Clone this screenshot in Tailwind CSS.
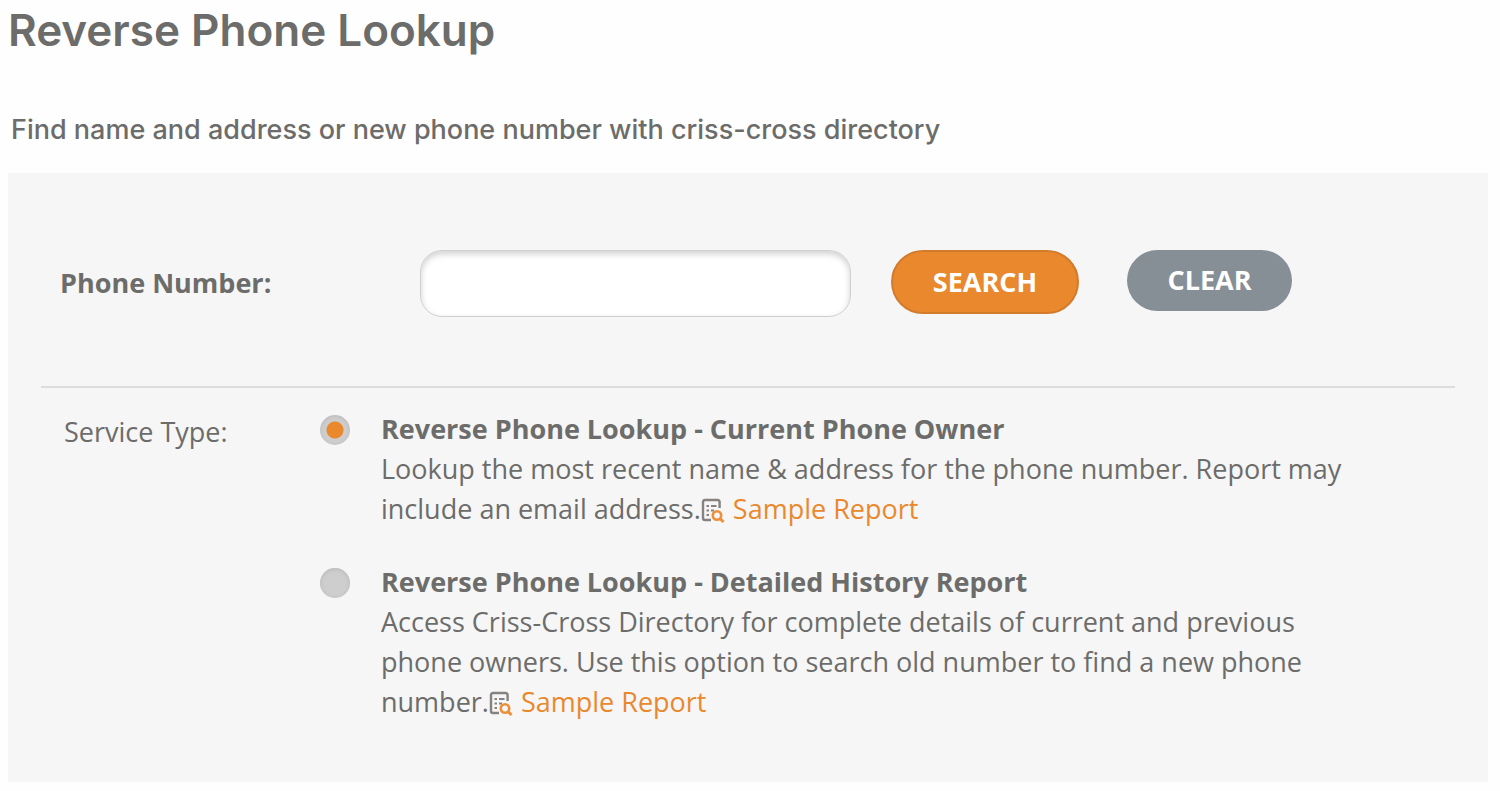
<!DOCTYPE html>
<html lang="en">
<head>
<meta charset="utf-8">
<title>Reverse Phone Lookup</title>
<script src="https://cdn.jsdelivr.net/npm/@tailwindcss/browser@4"></script>
</head>
<body class="bg-[#fefefe] font-['Open_Sans',sans-serif] text-[#6c6c6a]">
<svg class="hidden">
  <symbol id="report" viewBox="0 0 24 26">
    <path d="M18.600 10V4q0-2-2-2H4Q2 2 2 4v16q0 2 2 2h6" fill="none" stroke="#85827f" stroke-width="2.400"/>
    <path d="M5.500 8h2.500M10 8h5.500M5.500 12.500h2.500M10 12.500h3M5.500 17h2.500" stroke="#85827f" stroke-width="2.200"/>
    <circle cx="16" cy="17.500" r="4.200" fill="none" stroke="#ee8f38" stroke-width="2.600"/>
    <path d="M19 20.500l3.500 3.500" stroke="#ee8f38" stroke-width="3"/>
  </symbol>
</svg>
<main class="pl-2 pr-3 pb-2">
  <h1 class="h-14 font-['Inter',sans-serif] text-[44px] leading-[60px] font-semibold">Reverse Phone Lookup</h1>
  <h2 class="mt-14 px-[3px] font-['Inter',sans-serif] text-[27px] leading-9 font-medium">Find name and address or new phone number with criss-cross directory</h2>
  <form class="mt-[25px] bg-[#f6f6f6] px-[33px] pt-[77px] pb-[60px]">
    <div class="flex items-start pl-[19px]">
      <label for="phone" class="w-[360px] text-[27px] leading-[66px] font-bold">Phone Number:</label>
      <input id="phone" type="tel" class="h-[67px] w-[431px] rounded-[22px] border border-[#d0d0d0] bg-white px-5 text-[27px] shadow-[inset_0_3px_6px_#d0d0d0]">
      <button type="submit" class="ml-10 h-16 w-[188px] rounded-full border-2 border-[#d27b2b] bg-[#e9882d] text-[27px] font-bold text-white">SEARCH</button>
      <button type="reset" class="ml-12 h-[61px] w-[165px] rounded-full bg-[#868e96] text-[27px] font-bold text-white">CLEAR</button>
    </div>
    <fieldset class="mt-[69px] flex border-t-2 border-[#dcdcdc] pt-5 text-[27px] leading-10">
      <div id="service" class="w-[279px] pl-[23px] pt-1">Service Type:</div>
      <div class="flex w-[1030px] flex-col gap-8" role="radiogroup" aria-labelledby="service">
        <div class="flex gap-[31px]">
          <input id="current" name="service" type="radio" checked class="mt-[7px] size-[30px] shrink-0 appearance-none rounded-full bg-[#cecece] shadow-[inset_0_1px_4px_#b8b8b8] checked:bg-[radial-gradient(circle,#e9882d_8px,#cecece_9px)]">
          <div><label for="current" class="block leading-[41px] font-bold">Reverse Phone Lookup - Current Phone Owner</label>
          <p>Lookup the most recent name &amp; address for the phone number. Report may include an email address.<svg class="mr-2 inline h-[26px] w-6 align-[-5px]" aria-hidden="true"><use href="#report"/></svg><a href="#" class="text-[#e9882d]">Sample Report</a></p></div>
        </div>
        <div class="flex gap-[31px]">
          <input id="history" name="service" type="radio" class="mt-[7px] size-[30px] shrink-0 appearance-none rounded-full bg-[#cecece] shadow-[inset_0_1px_4px_#b8b8b8] checked:bg-[radial-gradient(circle,#e9882d_8px,#cecece_9px)]">
          <div><label for="history" class="block leading-[41px] font-bold">Reverse Phone Lookup - Detailed History Report</label>
          <p>Access Criss-Cross Directory for complete details of current and previous phone owners. Use this option to search old number to find a new phone number.<svg class="mr-2 inline h-[26px] w-6 align-[-5px]" aria-hidden="true"><use href="#report"/></svg><a href="#" class="text-[#e9882d]">Sample Report</a></p></div>
        </div>
      </div>
    </fieldset>
  </form>
</main>
</body>
</html>
